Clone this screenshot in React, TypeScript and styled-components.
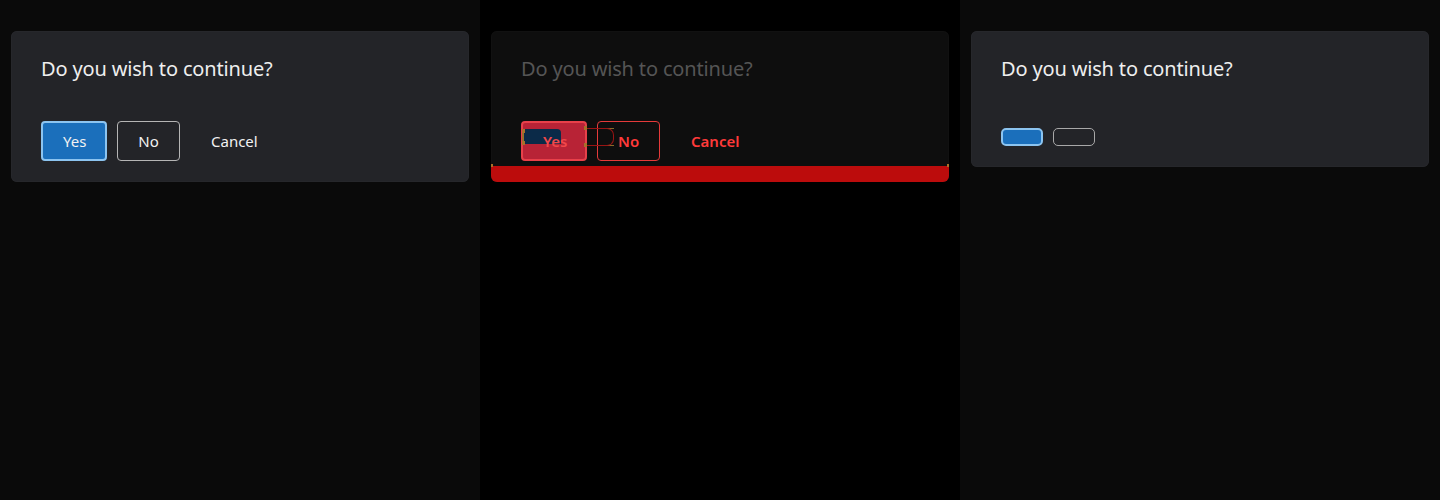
import React from "react";
import styled, { createGlobalStyle, css } from "styled-components";

const GlobalStyle = createGlobalStyle`
  html, body {
    margin: 0;
    padding: 0;
    background: #0a0a0a;
    font-family: "Noto Sans", "Open Sans", sans-serif;
  }
`;

type Variant = "normal" | "alert" | "empty";

const Stage = styled.div`
  display: grid;
  grid-template-columns: repeat(3, 480px);
  height: 500px;
`;

const Pane = styled.div<{ $variant: Variant }>`
  background: ${({ $variant }) => ($variant === "alert" ? "#000000" : "#0a0a0a")};
  padding: 31px 11px;
  box-sizing: border-box;
`;

const Card = styled.div<{ $variant: Variant }>`
  position: relative;
  display: flex;
  flex-direction: column;
  border-radius: 6px;
  overflow: hidden;
  background: ${({ $variant }) => ($variant === "alert" ? "#0e0e0e" : "#232428")};
  box-shadow: inset 0 0 0 1px ${({ $variant }) => ($variant === "alert" ? "#111" : "#26272b")};
`;

const Title = styled.div<{ $variant: Variant }>`
  padding: 24px 30px 0;
  font-size: 20px;
  line-height: 27px;
  letter-spacing: -0.16px;
  color: ${({ $variant }) => ($variant === "alert" ? "#555555" : "#eeeeee")};
`;

const Actions = styled.div<{ $variant: Variant }>`
  display: flex;
  align-items: center;
  gap: 10px;
  padding: 0 30px;
  margin-top: ${({ $variant }) => ($variant === "empty" ? "46px" : "39px")};
  margin-bottom: ${({ $variant }) =>
    $variant === "empty" ? "21px" : $variant === "alert" ? "5px" : "21px"};
`;

const Label = styled.span`
  position: relative;
  z-index: 2;
`;

const Button = styled.button<{ $kind: "primary" | "outline" | "text"; $variant: Variant }>`
  position: relative;
  box-sizing: border-box;
  height: 40px;
  padding: 0 20px;
  border-radius: 4px;
  font-family: inherit;
  font-size: 15px;
  color: #f2f2f2;
  background: transparent;
  border: 1px solid transparent;
  cursor: pointer;

  ${({ $kind }) =>
    $kind === "primary" &&
    css`
      width: 66px;
      background: #1b6fbb;
      border: 2px solid #8cc4f0;
    `}
  ${({ $kind }) =>
    $kind === "outline" &&
    css`
      width: 63px;
      border-color: #b5b5b5;
    `}
  ${({ $kind }) =>
    $kind === "text" &&
    css`
      padding: 0 31px 0 20px;
    `}

  ${({ $variant, $kind }) =>
    $variant === "alert" &&
    css`
      color: #ff3a3a;
      font-weight: 600;
      ${$kind === "primary" &&
      css`
        background: #b82336;
        border-color: #e8404a;
        color: #f0484a;
      `}
      ${$kind === "outline" &&
      css`
        border-color: #e53a3a;
      `}
    `}

  ${({ $variant, $kind }) =>
    $variant === "empty" &&
    css`
      height: 18px;
      width: 42px;
      padding: 0;
      border-radius: 5px;
      ${$kind === "outline" &&
      css`
        border-color: #a8a8a8;
      `}
    `}
`;

const AlertBar = styled.div`
  position: relative;
  height: 16px;
  background: #bc0c0c;
  &::before,
  &::after {
    content: "";
    position: absolute;
    top: -2px;
    width: 2px;
    height: 3px;
    background: #a8702a;
  }
  &::before {
    left: 0;
  }
  &::after {
    right: 0;
  }
`;

/* leftover selection marks that float over the alert card */
const GhostFill = styled.div`
  position: absolute;
  left: 31px;
  top: 98px;
  width: 39px;
  height: 15px;
  background: #0b2a48;
  border-radius: 0 4px 0 0;
  border-left: 2px solid #9a6e2c;
  box-sizing: border-box;
`;

const GhostOutline = styled.div`
  position: absolute;
  left: 96px;
  top: 97px;
  width: 27px;
  height: 18px;
  box-sizing: border-box;
  border: 1px solid #9a1414;
  border-left: none;
  border-radius: 0 7px 7px 0;
`;

const GhostLink = styled.div`
  position: absolute;
  left: 95px;
  top: 97px;
  width: 28px;
  height: 18px;
  box-sizing: border-box;
  border-top: 1px solid #8a6a2a;
  border-bottom: 1px solid #8a6a2a;
`;

const Handle = styled.span<{ $x: number; $y: number }>`
  position: absolute;
  left: ${({ $x }) => $x}px;
  top: ${({ $y }) => $y}px;
  width: 3px;
  height: 4px;
  background: #a8702a;
`;

const Dialog: React.FC<{ variant: Variant }> = ({ variant }) => {
  const withLabels = variant !== "empty";
  return (
    <Pane $variant={variant}>
      <Card $variant={variant}>
        <Title $variant={variant}>Do you wish to continue?</Title>
        <Actions $variant={variant}>
          <Button $kind="primary" $variant={variant}>
            {withLabels && <Label>Yes</Label>}
          </Button>
          <Button $kind="outline" $variant={variant}>
            {withLabels && <Label>No</Label>}
          </Button>
          {withLabels && (
            <Button $kind="text" $variant={variant}>
              <Label>Cancel</Label>
            </Button>
          )}
        </Actions>
        {variant === "alert" && (
          <>
            <AlertBar />
            <GhostFill />
            <GhostLink />
            <GhostOutline />
            <Handle $x={31} $y={98} />
            <Handle $x={31} $y={110} />
            <Handle $x={93} $y={95} />
            <Handle $x={93} $y={112} />
          </>
        )}
      </Card>
    </Pane>
  );
};

const App: React.FC = () => {
  return (
    <>
      <GlobalStyle />
      <Stage>
        <Dialog variant="normal" />
        <Dialog variant="alert" />
        <Dialog variant="empty" />
      </Stage>
    </>
  );
};

export default App;
